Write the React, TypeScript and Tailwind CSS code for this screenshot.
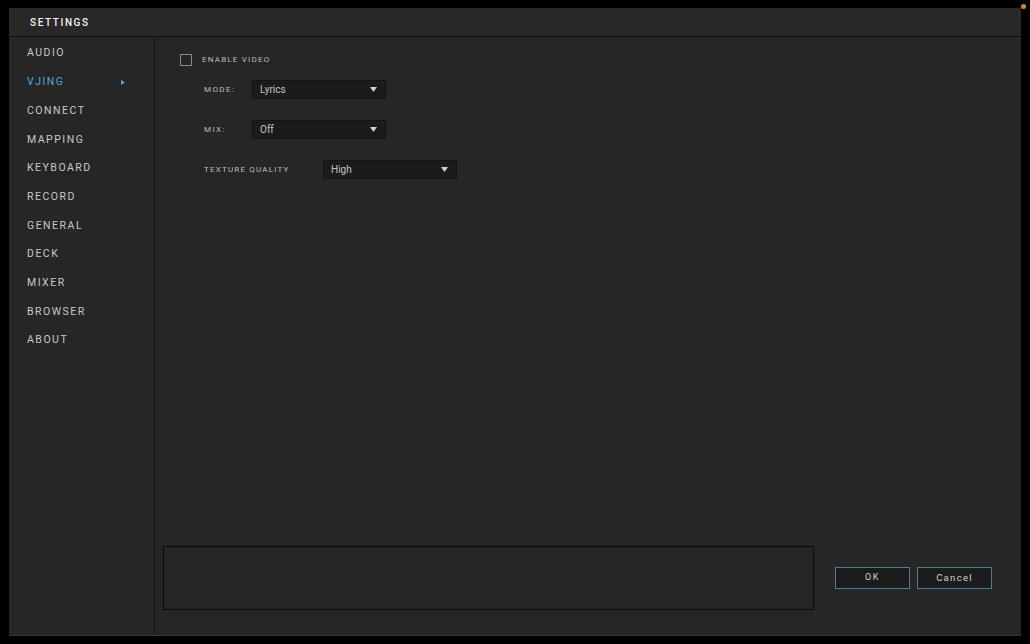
import React from 'react';

const navItems = [
  'AUDIO',
  'VJING',
  'CONNECT',
  'MAPPING',
  'KEYBOARD',
  'RECORD',
  'GENERAL',
  'DECK',
  'MIXER',
  'BROWSER',
  'ABOUT',
];

const font = { fontFamily: 'Roboto, "Liberation Sans", sans-serif' };

function Caret() {
  return (
    <svg width="7" height="5" viewBox="0 0 7 5" className="shrink-0">
      <path d="M0 0 L7 0 L3.5 5 Z" fill="#d0d0d0" />
    </svg>
  );
}

function Select({ value, width }: { value: string; width: string }) {
  return (
    <div
      className={`flex h-[19px] ${width} items-center justify-between border border-[#141414] bg-[#1b1b1b] pl-[7px] pr-[8px] text-[10px] text-[#c4c4c4]`}
    >
      <span>{value}</span>
      <Caret />
    </div>
  );
}

export default function App() {
  return (
    <div
      className="relative h-[644px] w-[1030px] overflow-hidden bg-black pl-[9px] pt-[8px]"
      style={font}
    >
      <div className="absolute right-[4px] top-[4px] h-[5px] w-[5px] rounded-full bg-[#d08a2a]" />

      <div className="flex h-[628px] w-[1012px] flex-col border-b border-[#383838] bg-[#262626]">
        <div className="flex h-[29px] shrink-0 items-center border-b border-[#121212] bg-[#282828] pl-[21px]">
          <span className="text-[10px] font-medium tracking-[1.6px] text-[#f2f2f2]">
            SETTINGS
          </span>
        </div>

        <div className="flex min-h-0 flex-1">
          <div className="flex w-[146px] shrink-0 flex-col border-r border-[#121212] pt-[2px]">
            {navItems.map((item) => (
              <div
                key={item}
                className="flex h-[28.7px] items-center justify-between pl-[18px] pr-[29px]"
              >
                <span
                  className={`text-[10.5px] font-normal tracking-[1.5px] ${
                    item === 'VJING' ? 'text-[#4fa9d6]' : 'text-[#c8c8c8]'
                  }`}
                >
                  {item}
                </span>
                {item === 'VJING' && (
                  <svg width="4" height="5" viewBox="0 0 4 5">
                    <path d="M0 0 L4 2.5 L0 5 Z" fill="#4fa9d6" />
                  </svg>
                )}
              </div>
            ))}
          </div>

          <div className="flex flex-1 flex-col">
            <div className="flex flex-col pl-[25px] pt-[17px]">
              <div className="flex items-center gap-[10px]">
                <div className="h-[12px] w-[12px] border border-[#8a8a8a]" />
                <span className="text-[8px] font-normal tracking-[1.2px] text-[#bdbdbd]">
                  ENABLE VIDEO
                </span>
              </div>

              <div className="mt-[14px] flex flex-col gap-[21px] pl-[24px]">
                <div className="flex items-center">
                  <span className="w-[48px] text-[8px] font-normal tracking-[1.4px] text-[#bdbdbd]">
                    MODE:
                  </span>
                  <Select value="Lyrics" width="w-[134px]" />
                </div>
                <div className="flex items-center">
                  <span className="w-[48px] text-[8px] font-normal tracking-[1.4px] text-[#bdbdbd]">
                    MIX:
                  </span>
                  <Select value="Off" width="w-[134px]" />
                </div>
                <div className="flex items-center">
                  <span className="w-[119px] text-[8px] font-normal tracking-[1.2px] text-[#bdbdbd]">
                    TEXTURE QUALITY
                  </span>
                  <Select value="High" width="w-[134px]" />
                </div>
              </div>
            </div>

            <div className="flex-1" />

            <div className="flex items-center pb-[25px] pl-[8px] pr-[29px]">
              <div className="h-[64px] w-[651px] border border-[#0a0a0a] bg-[#262626]" />
              <div className="ml-auto flex gap-[7px]">
                <button className="flex h-[22px] w-[75px] items-center justify-center border border-[#4e7d91] bg-[#1c1c1c] text-[9px] font-normal tracking-[1.5px] text-[#d0d0d0]">
                  OK
                </button>
                <button className="flex h-[22px] w-[75px] items-center justify-center border border-[#4e7d91] bg-[#1c1c1c] text-[9.5px] font-normal tracking-[1.3px] text-[#d0d0d0]">
                  Cancel
                </button>
              </div>
            </div>
          </div>
        </div>
      </div>
    </div>
  );
}
